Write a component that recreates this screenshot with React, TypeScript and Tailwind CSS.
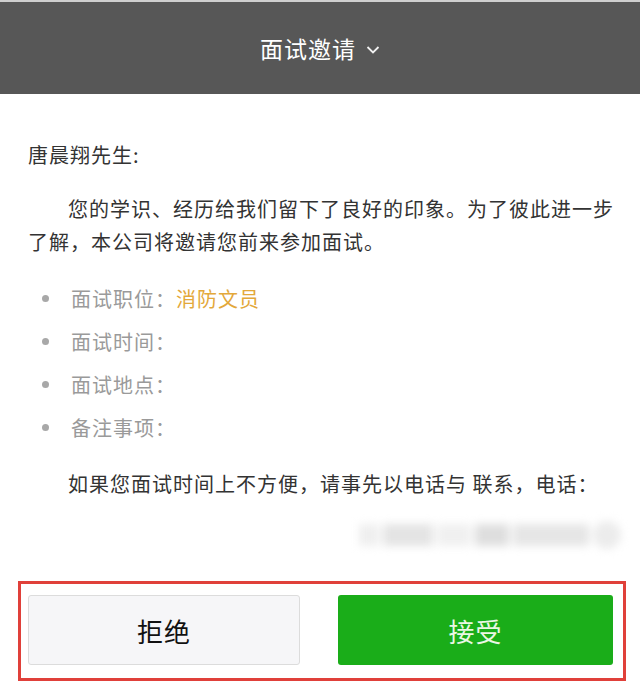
import React from 'react';

const items = [
    { label: '面试职位：', value: '消防文员' },
    { label: '面试时间：', value: '' },
    { label: '面试地点：', value: '' },
    { label: '备注事项：', value: '' },
];

const App: React.FC = () => {
    return (
        <div
            className="w-[640px] h-[694px] overflow-hidden bg-white"
            style={{ fontFamily: '"Noto Sans CJK SC", "Noto Sans", sans-serif' }}
        >
            {/* header */}
            <div className="h-[94px] bg-[#575757] border-t-2 border-[#cfcfcf] flex items-center justify-center gap-[10px]">
                <span className="text-white text-[23px] leading-none tracking-[1px]">面试邀请</span>
                <svg width="14" height="10" viewBox="0 0 14 10" className="mt-[4px]">
                    <path d="M1.5 2 L7 7.5 L12.5 2" fill="none" stroke="#f2f2f2" strokeWidth="1.8" />
                </svg>
            </div>

            {/* letter */}
            <div className="pl-[28px] pr-[22px] pt-[46px] text-[20px] text-[#333] tracking-[1px]">
                <p className="leading-[30px]">唐晨翔先生:</p>
                <p className="mt-[22px] leading-[33px] indent-[2em]">
                    您的学识、经历给我们留下了良好的印象。为了彼此进一步了解，本公司将邀请您前来参加面试。
                </p>

                <ul className="mt-[19px] pl-[14px]">
                    {items.map((it) => (
                        <li key={it.label} className="h-[43px] flex items-center text-[#9a9a9a]">
                            <span className="w-[7px] h-[7px] rounded-full bg-[#a8a8a8]" />
                            <span className="ml-[22px]">{it.label}</span>
                            {it.value && <span className="text-[#e3a83a]">{it.value}</span>}
                        </li>
                    ))}
                </ul>

                <p className="mt-[19px] leading-[32px] indent-[2em] whitespace-nowrap">
                    如果您面试时间上不方便，请事先以电话与 联系，电话：
                </p>

                {/* blurred phone number */}
                <div className="mt-[19px] ml-[331px] h-[32px] w-[262px] flex items-center gap-[4px] blur-[4px]">
                    <div className="h-[22px] w-[20px] bg-[#efefef]" />
                    <div className="h-[22px] w-[50px] bg-[#e4e4e4]" />
                    <div className="h-[22px] w-[34px] bg-[#f0f0f0]" />
                    <div className="h-[22px] w-[34px] bg-[#dedede]" />
                    <div className="h-[22px] w-[76px] bg-[#e6e6e6]" />
                    <div className="h-[28px] w-[28px] rounded-full bg-[#ececec]" />
                </div>
            </div>

            {/* actions */}
            <div className="mt-[30px] ml-[18px] w-[608px] border-[3px] border-[#e0403a] pt-[11px] pb-[13px] pl-[7px] flex gap-[38px]">
                <button className="w-[272px] h-[70px] bg-[#f6f6f8] border border-[#dcdcdc] rounded-[3px] text-[26px] text-[#111] flex items-center justify-center tracking-[1px]">
                    拒绝
                </button>
                <button className="w-[275px] h-[70px] bg-[#1aad19] rounded-[3px] text-[26px] text-[#eaf7e4] flex items-center justify-center tracking-[1px]">
                    接受
                </button>
            </div>
        </div>
    );
};

export default App;
